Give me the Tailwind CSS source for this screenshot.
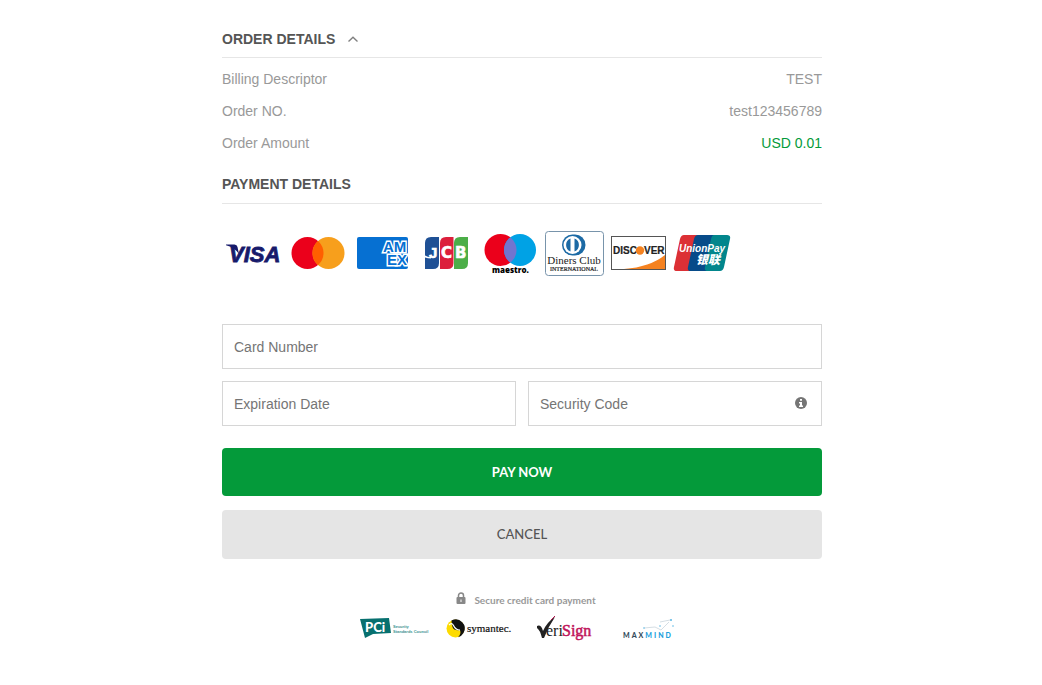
<!DOCTYPE html>
<html lang="en">
<head>
    <meta charset="UTF-8">
    <meta name="viewport" content="width=device-width, initial-scale=1.0">
    <title>Payment</title>
    <script src="https://cdn.jsdelivr.net/npm/@tailwindcss/browser@4"></script>
</head>
<body class="bg-white pl-0.5 font-['Liberation_Sans',Arial,sans-serif] text-sm text-[#999]">
    <main class="mx-auto w-full max-w-[600px] pt-[21px] pb-10">
        <!-- Order details -->
        <section>
            <h2 class="border-b border-[#e6e6e6] font-bold text-[#555]">
                <button type="button" aria-expanded="true" class="flex items-center gap-3 leading-9">
                    ORDER DETAILS
                    <svg class="h-3 w-3" viewBox="0 0 12 12" fill="none" stroke="#808080" stroke-width="1.4"><path d="M1.500 8.500 6 4.200l4.500 4.300"/></svg>
                </button>
            </h2>
            <dl class="pt-[5px] leading-8">
                <div class="flex justify-between"><dt>Billing Descriptor</dt><dd>TEST</dd></div>
                <div class="flex justify-between"><dt>Order NO.</dt><dd>test123456789</dd></div>
                <div class="flex justify-between"><dt>Order Amount</dt><dd class="text-[#049a3a]">USD 0.01</dd></div>
            </dl>
        </section>

        <!-- Payment details -->
        <section class="mt-1.5">
            <h2 class="border-b border-[#e6e6e6] font-bold leading-[38px] text-[#555]">PAYMENT DETAILS</h2>

            <!-- Accepted cards -->
            <div class="mt-[26px] flex flex-wrap">
                <svg class="h-12 w-16" viewBox="0 0 64 48" role="img" aria-label="Visa">
                    <path d="M4 14.500h8.500q2.500 0 3 2.500l1.500 7Q12 17 4 15.300z" fill="#171a6b"/>
                    <text x="7" y="32" font-family="Liberation Sans, sans-serif" font-size="22" font-weight="700" font-style="italic" fill="#171a6b" stroke="#171a6b" stroke-width=".8">VISA</text>
                </svg>
                <svg class="h-12 w-16" viewBox="0 0 64 48" role="img" aria-label="Mastercard">
                    <clipPath id="mc"><circle cx="21.500" cy="23" r="16"/></clipPath>
                    <circle cx="21.500" cy="23" r="16" fill="#eb001b"/>
                    <circle cx="42.500" cy="23" r="16" fill="#f79f1c"/>
                    <circle cx="42.500" cy="23" r="16" fill="#ff5f00" clip-path="url(#mc)"/>
                </svg>
                <svg class="h-12 w-16" viewBox="0 0 64 48" role="img" aria-label="American Express">
                    <clipPath id="ax"><rect x="7" y="7" width="51" height="32" rx="2"/></clipPath>
                    <g clip-path="url(#ax)">
                        <rect x="7" y="7" width="51" height="32" fill="#0670d2"/>
                        <g font-family="Liberation Sans, sans-serif" font-size="15" font-weight="700" fill="#0670d2" stroke="#fff" stroke-width="3" stroke-linejoin="miter" paint-order="stroke">
                            <text x="33" y="22">AM</text>
                            <text x="37" y="35">EX</text>
                        </g>
                    </g>
                </svg>
                <svg class="h-12 w-16" viewBox="0 0 64 48" role="img" aria-label="JCB">
                    <path d="M11 13q0-6 6-6h8v26q0 6-6 6h-8z" fill="#1f5095"/>
                    <path d="M26 13q0-6 6-6h7.500v26q0 6-6 6H26z" fill="#dc1f3c"/>
                    <path d="M40 13q0-6 6-6h8v26q0 6-6 6h-8z" fill="#4cae48"/>
                    <path d="M11 25.500q4 2 6 1.500v1.500q-3 0-6-1z" fill="#fff"/>
                    <text y="28" font-family="DejaVu Sans, sans-serif" font-size="15" font-weight="700" fill="#fff" stroke="#fff" stroke-width=".6"><tspan x="15" font-family="Liberation Sans, sans-serif">J</tspan><tspan x="27">C</tspan><tspan x="41">B</tspan></text>
                </svg>
                <svg class="h-12 w-16" viewBox="0 0 64 48" role="img" aria-label="Maestro">
                    <clipPath id="ms"><circle cx="22.500" cy="20" r="16"/></clipPath>
                    <circle cx="22.500" cy="20" r="16" fill="#eb001b"/>
                    <circle cx="42" cy="20" r="16" fill="#00a2e5"/>
                    <circle cx="42" cy="20" r="16" fill="#7375cf" clip-path="url(#ms)"/>
                    <text x="14" y="43" font-family="Open Sans, sans-serif" font-size="8" font-weight="800" fill="#000">maestro.</text>
                </svg>
                <svg class="h-12 w-16" viewBox="0 0 64 48" role="img" aria-label="Diners Club International">
                    <rect x="3.500" y="1.500" width="58" height="44" rx="3" fill="#fff" stroke="#7894ab"/>
                    <path d="M30.500 4.500h2.500a10.500 10.500 0 0 1 0 21h-2.500a10.500 10.500 0 0 1 0-21z" fill="#1c6aa5"/>
                    <circle cx="30.500" cy="15" r="9" fill="#fff"/>
                    <path d="M28.500 8.500v13a7 7 0 0 1 0-13zM32.500 8.500v13a7 7 0 0 0 0-13z" fill="#1c6aa5"/>
                    <text x="32" y="34" text-anchor="middle" font-family="Liberation Serif, serif" font-size="11" fill="#222">Diners Club</text>
                    <text x="32" y="41" text-anchor="middle" font-family="Liberation Serif, serif" font-size="6" fill="#222" stroke="#222" stroke-width=".2">INTERNATIONAL</text>
                </svg>
                <svg class="h-12 w-16" viewBox="0 0 64 48" role="img" aria-label="Discover">
                    <rect x="5.500" y="6.500" width="54" height="33" fill="#fff" stroke="#555"/>
                    <path d="M59 25v14H18q26-2 41-14z" fill="#f58220"/>
                    <g font-family="Liberation Sans, sans-serif" font-size="10" font-weight="700" fill="#222" stroke="#222" stroke-width=".2">
                        <text x="7" y="24">DISC</text>
                        <text x="38" y="24">VER</text>
                    </g>
                    <circle cx="34" cy="20.500" r="4.200" fill="#f58220"/>
                </svg>
                <svg class="h-12 w-16" viewBox="0 0 64 48" role="img" aria-label="UnionPay">
                    <path d="M14 5h16l-8 36H7q-4 0-3-4l6-28q1-4 4-4z" fill="#dc3035"/>
                    <path d="M28 5h17l-8 36H21q-4 0-3-4l6-28q1-4 4-4z" fill="#074b89"/>
                    <path d="M44 5h13q4 0 3 4l-6 28q-1 4-4 4H38q-4 0-3-4l6-28q1-4 3-4z" fill="#02868c"/>
                    <text x="9" y="22" font-family="Liberation Sans, sans-serif" font-size="10" font-weight="700" font-style="italic" fill="#fff">UnionPay</text>
                    <text x="26" y="34" font-family="Noto Sans CJK SC, sans-serif" font-size="12" font-weight="900" font-style="italic" fill="#fff">银联</text>
                </svg>
            </div>

            <!-- Card form -->
            <form class="mt-[46px]">
                <div class="grid grid-cols-2 gap-3">
                    <div class="col-span-2">
                        <label for="card-number" class="sr-only">Card Number</label>
                        <input id="card-number" type="text" inputmode="numeric" placeholder="Card Number" class="block h-[45px] w-full border border-[#d6d6d6] px-[11px] text-[#555] placeholder:text-[#757575]">
                    </div>
                    <div>
                        <label for="expiration" class="sr-only">Expiration Date</label>
                        <input id="expiration" type="text" placeholder="Expiration Date" class="block h-[45px] w-full border border-[#d6d6d6] px-[11px] text-[#555] placeholder:text-[#757575]">
                    </div>
                    <div class="relative">
                        <label for="security-code" class="sr-only">Security Code</label>
                        <input id="security-code" type="text" inputmode="numeric" placeholder="Security Code" class="block h-[45px] w-full border border-[#d6d6d6] pr-10 pl-[11px] text-[#555] placeholder:text-[#757575]">
                        <button type="button" aria-label="What is the security code?" class="absolute top-4 right-[15px]">
                            <svg class="h-3 w-3" viewBox="0 0 12 12"><circle cx="6" cy="6" r="6" fill="#757575"/><path d="M5 2h2v1.700H5zM4 5h3v3.500h1V10H4V8.500h1v-2H4z" fill="#fff"/></svg>
                        </button>
                    </div>
                </div>
                <button type="submit" class="mt-[22px] block h-12 w-full rounded bg-[#049a3a] font-['Lato',sans-serif] text-[13px] font-bold text-white">PAY NOW</button>
                <button type="button" class="mt-3.5 block h-[49px] w-full rounded bg-[#e5e5e5] font-['Lato',sans-serif] text-[13px] font-medium text-[#555]">CANCEL</button>
            </form>
        </section>

        <!-- Security badges -->
        <footer class="mt-[31px]">
            <p class="flex items-center justify-center gap-2 pl-2 font-['Lato',sans-serif] text-[10px] leading-5 font-bold">
                <svg class="mb-1 h-3 w-2.5" viewBox="0 0 10 12"><path d="M2.500 6V3.500a2.500 2.500 0 0 1 5 0V6" fill="none" stroke="#888" stroke-width="1.500"/><rect x=".5" y="5" width="9" height="7" rx="1" fill="#888"/><path d="M4.300 7.500h1.400v2.500H4.300z" fill="#ddd"/></svg>
                Secure credit card payment
            </p>
            <div class="mt-1 flex items-center justify-center gap-4 pl-1">
                <svg class="h-7 w-[70px]" viewBox="0 0 70 28" role="img" aria-label="PCI Security Standards Council">
                    <path d="M0 5 29 4l2 15-18 1-8 4z" fill="#07706f"/>
                    <text x="5" y="18" font-family="Lato, sans-serif" font-size="13" font-weight="900" fill="#fff">PCi</text>
                    <g font-family="Liberation Sans, sans-serif" font-size="4" font-weight="700" fill="#3d9291">
                        <text x="33" y="14">Security</text>
                        <text x="33" y="19">Standards Council</text>
                    </g>
                </svg>
                <svg class="h-7 w-[70px]" viewBox="0 0 70 28" role="img" aria-label="Symantec">
                    <circle cx="9.500" cy="14.500" r="9" fill="#fddb00"/>
                    <path d="M5.500 6.500a9 9 0 0 1 12 12.500q-2 3.500-5.500 4.200 3.500-3.200 2-7.200-6 1-7.500-3-1-3.500-1-6.500z" fill="#111"/>
                    <path d="M3 11q3-3 4.500.500 2 4.500 6.500 4.500" fill="none" stroke="#fff" stroke-width="1.200"/>
                    <text x="21" y="18" font-family="Liberation Serif, serif" font-size="11" fill="#111" stroke="#111" stroke-width=".2">symantec.</text>
                </svg>
                <svg class="h-7 w-[70px]" viewBox="0 0 70 28" role="img" aria-label="VeriSign">
                    <path d="M5 12q4-2 6 5Q15 8 23 3 16 13 12 24h-2q-2-8-5-10z" fill="#222"/>
                    <path d="m19 6 4-4" stroke="#b5124e" stroke-width="1"/>
                    <g font-family="Liberation Serif, serif" font-size="16">
                        <text x="14" y="22" fill="#222">eri</text>
                        <text x="30" y="22" fill="#c0135a" stroke="#c0135a" stroke-width=".5">Sign</text>
                    </g>
                </svg>
                <svg class="h-7 w-[70px]" viewBox="0 0 70 28" role="img" aria-label="MaxMind">
                    <text x="5" y="24" font-family="Lato, sans-serif" font-size="7" font-weight="900" letter-spacing="2" fill="#344c5c">MAX<tspan fill="#1ba0dd">MIND</tspan></text>
                    <path d="m26 14 11-1 6 3 8-8M42 8l10-2" fill="none" stroke="#b9c8d2" stroke-width=".6"/>
                    <g fill="#58b6e3"><circle cx="26" cy="14" r=".8"/><circle cx="42" cy="12" r=".8"/><circle cx="53" cy="6" r="1"/><circle cx="55" cy="12" r=".8"/></g>
                </svg>
            </div>
        </footer>
    </main>
</body>
</html>
